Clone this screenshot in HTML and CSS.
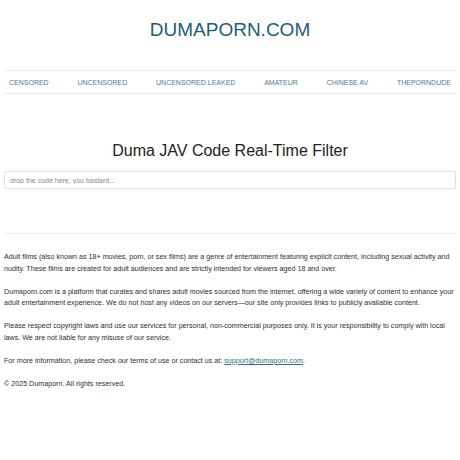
FILE: index.html
```html
<!DOCTYPE html>
<html lang="en">
<head>
<meta charset="utf-8">
<title>Dumaporn.com</title>
<link rel="stylesheet" href="styles.css">
</head>
<body>
<div class="page">
  <header class="site-header">
    <h1 class="logo">DUMAPORN.COM</h1>
  </header>
  <nav class="nav">
    <a href="#">CENSORED</a>
    <a href="#">UNCENSORED</a>
    <a href="#">UNCENSORED LEAKED</a>
    <a href="#">AMATEUR</a>
    <a href="#">CHINESE AV</a>
    <a href="#">THEPORNDUDE</a>
  </nav>
  <main class="filter">
    <h2 class="filter-title">Duma JAV Code Real-Time Filter</h2>
    <input class="filter-input" type="text" placeholder="drop the code here, you bastard...">
    <div class="results"></div>
  </main>
  <hr class="divider">
  <section class="about">
    <p>Adult films (also known as 18+ movies, porn, or sex films) are a genre of entertainment featuring explicit content, including sexual activity and nudity. These films are created for adult audiences and are strictly intended for viewers aged 18 and over.</p>
    <p>Dumaporn.com is a platform that curates and shares adult movies sourced from the internet, offering a wide variety of content to enhance your adult entertainment experience. We do not host any videos on our servers—our site only provides links to publicly available content.</p>
    <p>Please respect copyright laws and use our services for personal, non-commercial purposes only. It is your responsibility to comply with local laws. We are not liable for any misuse of our service.</p>
    <p>For more information, please check our terms of use or contact us at: <a class="mail" href="#">support@dumaporn.com</a>.</p>
    <p>© 2025 Dumaporn. All rights reserved.</p>
  </section>
</div>
</body>
</html>
```
FILE: styles.css
```css
html, body {
  margin: 0;
  padding: 0;
  background: #fff;
}
body {
  font-family: "Liberation Sans", Arial, sans-serif;
  color: #333;
}
.page {
  padding: 0 4px;
}
.site-header {
  padding-top: 18px;
}
.logo {
  margin: 0;
  text-align: center;
  font-size: 19px;
  line-height: 23px;
  font-weight: normal;
  color: #1f5d76;
}
.nav {
  margin-top: 29px;
  height: 22px;
  border-top: 1px solid #ebebeb;
  border-bottom: 1px solid #ebebeb;
  padding: 0 5px;
  display: flex;
  justify-content: space-between;
  align-items: center;
}
.nav a {
  font-size: 7px;
  color: #4a7d90;
  text-decoration: none;
}
.filter {
  display: flex;
  flex-direction: column;
}
.filter-title {
  margin: 47px 0 10px;
  text-align: center;
  font-size: 16px;
  line-height: 20px;
  font-weight: normal;
  color: #222;
}
.filter-input {
  box-sizing: border-box;
  width: 100%;
  height: 18px;
  margin: 0;
  padding: 0 5px;
  border: 1px solid #dedede;
  border-radius: 2px;
  font-family: "Liberation Sans", Arial, sans-serif;
  font-size: 7px;
  color: #333;
  outline: none;
}
.filter-input::placeholder {
  color: #8a8a8a;
}
.results {
  height: 44px;
}
.divider {
  margin: 0;
  border: 0;
  border-top: 1px solid #ececec;
}
.about {
  padding-top: 18px;
}
.about p {
  margin: 0 0 11.6px;
  font-size: 7.15px;
  line-height: 11.5px;
  color: #2e2e2e;
}
.mail {
  color: #2a6f88;
  text-decoration: underline;
}
```
